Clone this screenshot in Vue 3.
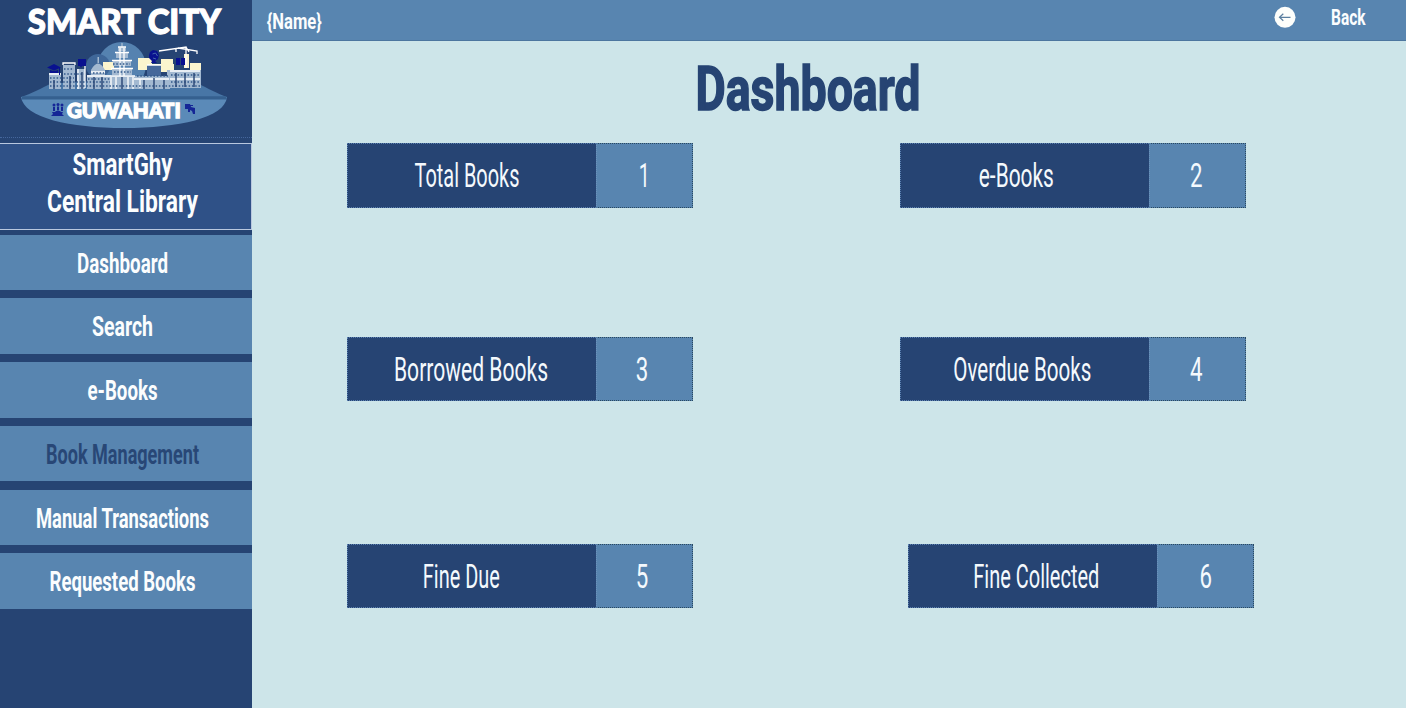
<script setup>
const nav = [
  { label: 'Dashboard', width: 91 },
  { label: 'Search', width: 61 },
  { label: 'e-Books', width: 70 },
  { label: 'Book Management', width: 153, current: true },
  { label: 'Manual Transactions', width: 173 },
  { label: 'Requested Books', width: 146 },
]

const rows = [
  [
    { label: 'Total Books', width: 105, center: 119, value: '1', vCenter: 47.2, vWidth: 11 },
    { label: 'e-Books', width: 75, center: 115.3, value: '2', vCenter: 46.2, vWidth: 12.5 },
  ],
  [
    { label: 'Borrowed Books', width: 154, center: 123, value: '3', vCenter: 45, vWidth: 12.5 },
    { label: 'Overdue Books', width: 138, center: 121.3, value: '4', vCenter: 46.2, vWidth: 12.5 },
  ],
  [
    { label: 'Fine Due', width: 77, center: 113.3, value: '5', vCenter: 45, vWidth: 12.5 },
    { label: 'Fine Collected', width: 126, center: 127.3, value: '6', vCenter: 47.8, vWidth: 12.5 },
  ],
]
</script>

<template>
  <div class="app">
    <aside class="sidebar">
      <div class="logo">
        <svg width="252" height="137" viewBox="0 0 252 137">
          <text class="brand" x="124.300" y="33.700" font-size="34.500" text-anchor="middle" textLength="193" lengthAdjust="spacingAndGlyphs">SMART CITY</text>
          <circle cx="121.700" cy="66" r="24" fill="#5582b0" />
          <circle cx="98" cy="66" r="12" fill="#3f6799" />
          <path d="M21 97C31 94 42 88 51 83.500Q124 78 198 83.500C207 88 218 94 227 97Z" fill="#4876a6" />
          <path d="M21 97H227C225 118 178 128 124 128S24 118 21 97Z" fill="#5b8ab8" />
          <path d="M22 96.300H226L227 99.500H21.500Z" fill="#35608f" />
          <path d="M103 62h11v8h-11zM138 58h14v12h-14zM152 64h22v8h-22zM161 59h12v8h-12zM184 54h5v14h-5zM190 63h11v8h-11z" fill="#fbf5ce" />
          <g fill="#a3b9d1">
            <path d="M49 73h12v16H49zM63 65h12v24H63zM77 69h8v20h-8zM87 75h24v14H87zM91 70q7-13 14 0v6H91zM97.500 57h1.500v6h-1.500z" />
            <path d="M108 76h28v13h-28zM112 69h20v6h-20zM113 61h18v5h-18zM116 53h12v5h-12zM118 47h8v4h-8zM121.300 43h1.400v5h-1.400z" />
            <path d="M134 76h36v13h-36zM167 70h34v18h-34z" />
          </g>
          <path d="M147 65h14v11h-14z" fill="#46689a" />
          <g fill="none" stroke="#fff" stroke-width="1.300">
            <path d="M109 76h26M111 68.500h22M112 60.500h20M115 52.500h14M118 47h8M120 48v28M124 48v28M111 77v12M116 77v12M128 77v12M133 77v12" />
            <path d="M63 65v-2h12v2M78 69v20M85 66v22M49 74h12M87 76h22M91 72h14M134 79h35M140 79v9M147 65h14M170 71h30M170 79h30" />
            <path d="M159 51l27-4v21M178 48l19 3v3M186 47l3 5M176 49v3" />
          </g>
          <g fill="none" stroke="#31588b" stroke-width="1.500" stroke-dasharray="1.500 1.800">
            <path d="M50 78h24M50 82h60M50 86h150M64 69h10M64 74h20M88 79h22M93 73h11M113 64h17M114 72h17M137 76h31M171 75h29M171 82h29" />
          </g>
          <path d="M54 80v9M70 76v13M82 72v17M94 77v12M102 77v12M122 77v12M144 80v9M154 78v11M164 80v9M176 73v14M185 73v14M194 73v14" stroke="#264373" stroke-width="1.400" />
          <g fill="#09118f">
            <path d="M47 67.500l7-3.500 7 3.500-7 3zM50 70q4 2 8 0v3h-8zM59 68h1v7h-1z" />
            <path d="M78 59h8v7h-4l-1 2-1-2h-2z" />
            <path d="M150 52l3-2 4 1 2 4-1 4-3 2 2 2h-6l1-2-3-3v-3z" />
            <path d="M176 58h4v7h-4zM181 58h4v7h-4z" />
          </g>
          <path d="M152.500 54l3-1 2 3M153 58l3 1" stroke="#537bb0" fill="none" stroke-width=".8" />
          <g fill="#152696">
            <circle cx="54" cy="105" r="1.500" /><circle cx="58" cy="104.500" r="1.500" /><circle cx="62" cy="105" r="1.500" />
            <path d="M53 107h2v4h-2zM57 106.500h2v4h-2zM61 107h2v4h-2zM51 116l2-2-1-2h3l1-1h4l1 1h2l-1 2 2 2z" />
            <path d="M185 104h5l1 3 4 1v6h-2l-1-3-2-1v2h-2v-3h-3zM190 105h3v1h-3z" />
          </g>
          <text class="brand" x="123.700" y="118.300" font-size="20.500" text-anchor="middle" textLength="114" lengthAdjust="spacingAndGlyphs">GUWAHATI</text>
        </svg>
      </div>
      <div class="library">
        <svg width="251" height="85">
          <text class="bold" x="122.500" y="31.300" font-size="32" text-anchor="middle" textLength="100" lengthAdjust="spacingAndGlyphs">SmartGhy</text>
          <text class="bold" x="122.500" y="68.300" font-size="32" text-anchor="middle" textLength="151" lengthAdjust="spacingAndGlyphs">Central Library</text>
        </svg>
      </div>
      <nav class="nav">
        <a v-for="item in nav" :key="item.label" class="nav-item" :class="{ current: item.current }">
          <svg width="252" height="55.500">
            <text class="bold" x="122.500" y="38.200" font-size="28.500" text-anchor="middle" :textLength="item.width" lengthAdjust="spacingAndGlyphs">{{ item.label }}</text>
          </svg>
        </a>
      </nav>
    </aside>

    <main class="main">
      <header class="topbar">
        <svg class="user" width="56" height="40">
          <text class="bold" x="28.300" y="28.600" font-size="21.500" text-anchor="middle" textLength="55" lengthAdjust="spacingAndGlyphs">{Name}</text>
        </svg>
        <a class="back">
          <svg width="22" height="40">
            <circle cx="11" cy="17.300" r="10.500" fill="#fdfefb" />
            <path d="M16.500 17.300H5.500M9.300 13.800L5.500 17.300l3.800 3.500" fill="none" stroke="#5b7f9f" stroke-width="1.200" />
          </svg>
          <svg width="36" height="40">
            <text class="bold" x="18.300" y="25.300" font-size="22.500" text-anchor="middle" textLength="34.500" lengthAdjust="spacingAndGlyphs">Back</text>
          </svg>
        </a>
      </header>

      <h1 class="title">
        <svg width="230" height="70">
          <text x="115" y="60" font-size="61.500" text-anchor="middle" textLength="225" lengthAdjust="spacingAndGlyphs">Dashboard</text>
        </svg>
      </h1>

      <section class="stats">
        <div v-for="(row, i) in rows" :key="i" class="row">
          <article v-for="card in row" :key="card.label" class="card">
            <div class="label">
              <svg width="248" height="62">
                <text class="light" :x="card.center" y="42.700" font-size="32.500" text-anchor="middle" :textLength="card.width" lengthAdjust="spacingAndGlyphs">{{ card.label }}</text>
              </svg>
            </div>
            <div class="value">
              <svg width="95" height="62">
                <text class="light" :x="card.vCenter" y="42.700" font-size="32.500" text-anchor="middle" :textLength="card.vWidth" lengthAdjust="spacingAndGlyphs">{{ card.value }}</text>
              </svg>
            </div>
          </article>
        </div>
      </section>
    </main>
  </div>
</template>

<style>
body {
  margin: 0;
}
</style>

<style scoped>
.app {
  display: flex;
  width: 1406px;
  height: 708px;
  overflow: hidden;
  background: #cde5e9;
  font-family: Roboto, "Liberation Sans", sans-serif;
}
svg {
  display: block;
  overflow: visible;
  flex: none;
}
.brand {
  font-family: Lato, "Open Sans", sans-serif;
  font-weight: 900;
  fill: #fff;
  stroke: #fff;
  stroke-width: 1.3px;
}
.bold {
  font-weight: 700;
  fill: #fbfdfe;
}
.light {
  font-weight: 400;
  fill: #f4f9fd;
}
.sidebar {
  box-sizing: border-box;
  flex: none;
  width: 252px;
  background: #264473;
}
.logo {
  height: 143px;
}
.logo svg {
  border-bottom: 1px dotted #45679d;
}
.library {
  box-sizing: border-box;
  height: 87px;
  border: solid #b9c8df;
  border-width: 1px 1px 1px 0;
  background: #2f5187;
}
.nav {
  display: flex;
  flex-direction: column;
  gap: 8.2px;
  padding-top: 4.8px;
}
.nav-item {
  height: 55.5px;
  background: #5885b0;
}
.current .bold {
  fill: #284776;
}
.main {
  flex: 1;
  display: flex;
  flex-direction: column;
}
.topbar {
  box-sizing: border-box;
  display: flex;
  justify-content: space-between;
  height: 41px;
  padding: 0 40px 0 14px;
  border-bottom: 1px solid #4c769f;
  background: #5885b0;
}
.back {
  display: flex;
  gap: 34px;
}
.title {
  margin: 9px 0 0 441px;
  height: 93px;
  font-weight: 700;
}
.title text {
  fill: #264473;
  stroke: #264473;
  stroke-width: 1.6px;
}
.stats {
  display: flex;
  flex-direction: column;
  padding-left: 95px;
}
.row {
  display: flex;
  gap: 207px;
  height: 194px;
}
.row:nth-child(2) {
  height: 207px;
}
.row:nth-child(3) {
  height: 64px;
  gap: 215px;
}
.card {
  box-sizing: border-box;
  display: flex;
  width: 346px;
  height: 64px;
}
.row:first-child .card {
  height: 65px;
}
.label {
  box-sizing: border-box;
  width: 249px;
  border: 1px dotted #5a80b0;
  border-right: 0;
  background: #264473;
}
.value {
  box-sizing: border-box;
  width: 97px;
  border: 1px dotted #294960;
  border-left-color: #6c91bb;
  background: #5885b0;
}
</style>
